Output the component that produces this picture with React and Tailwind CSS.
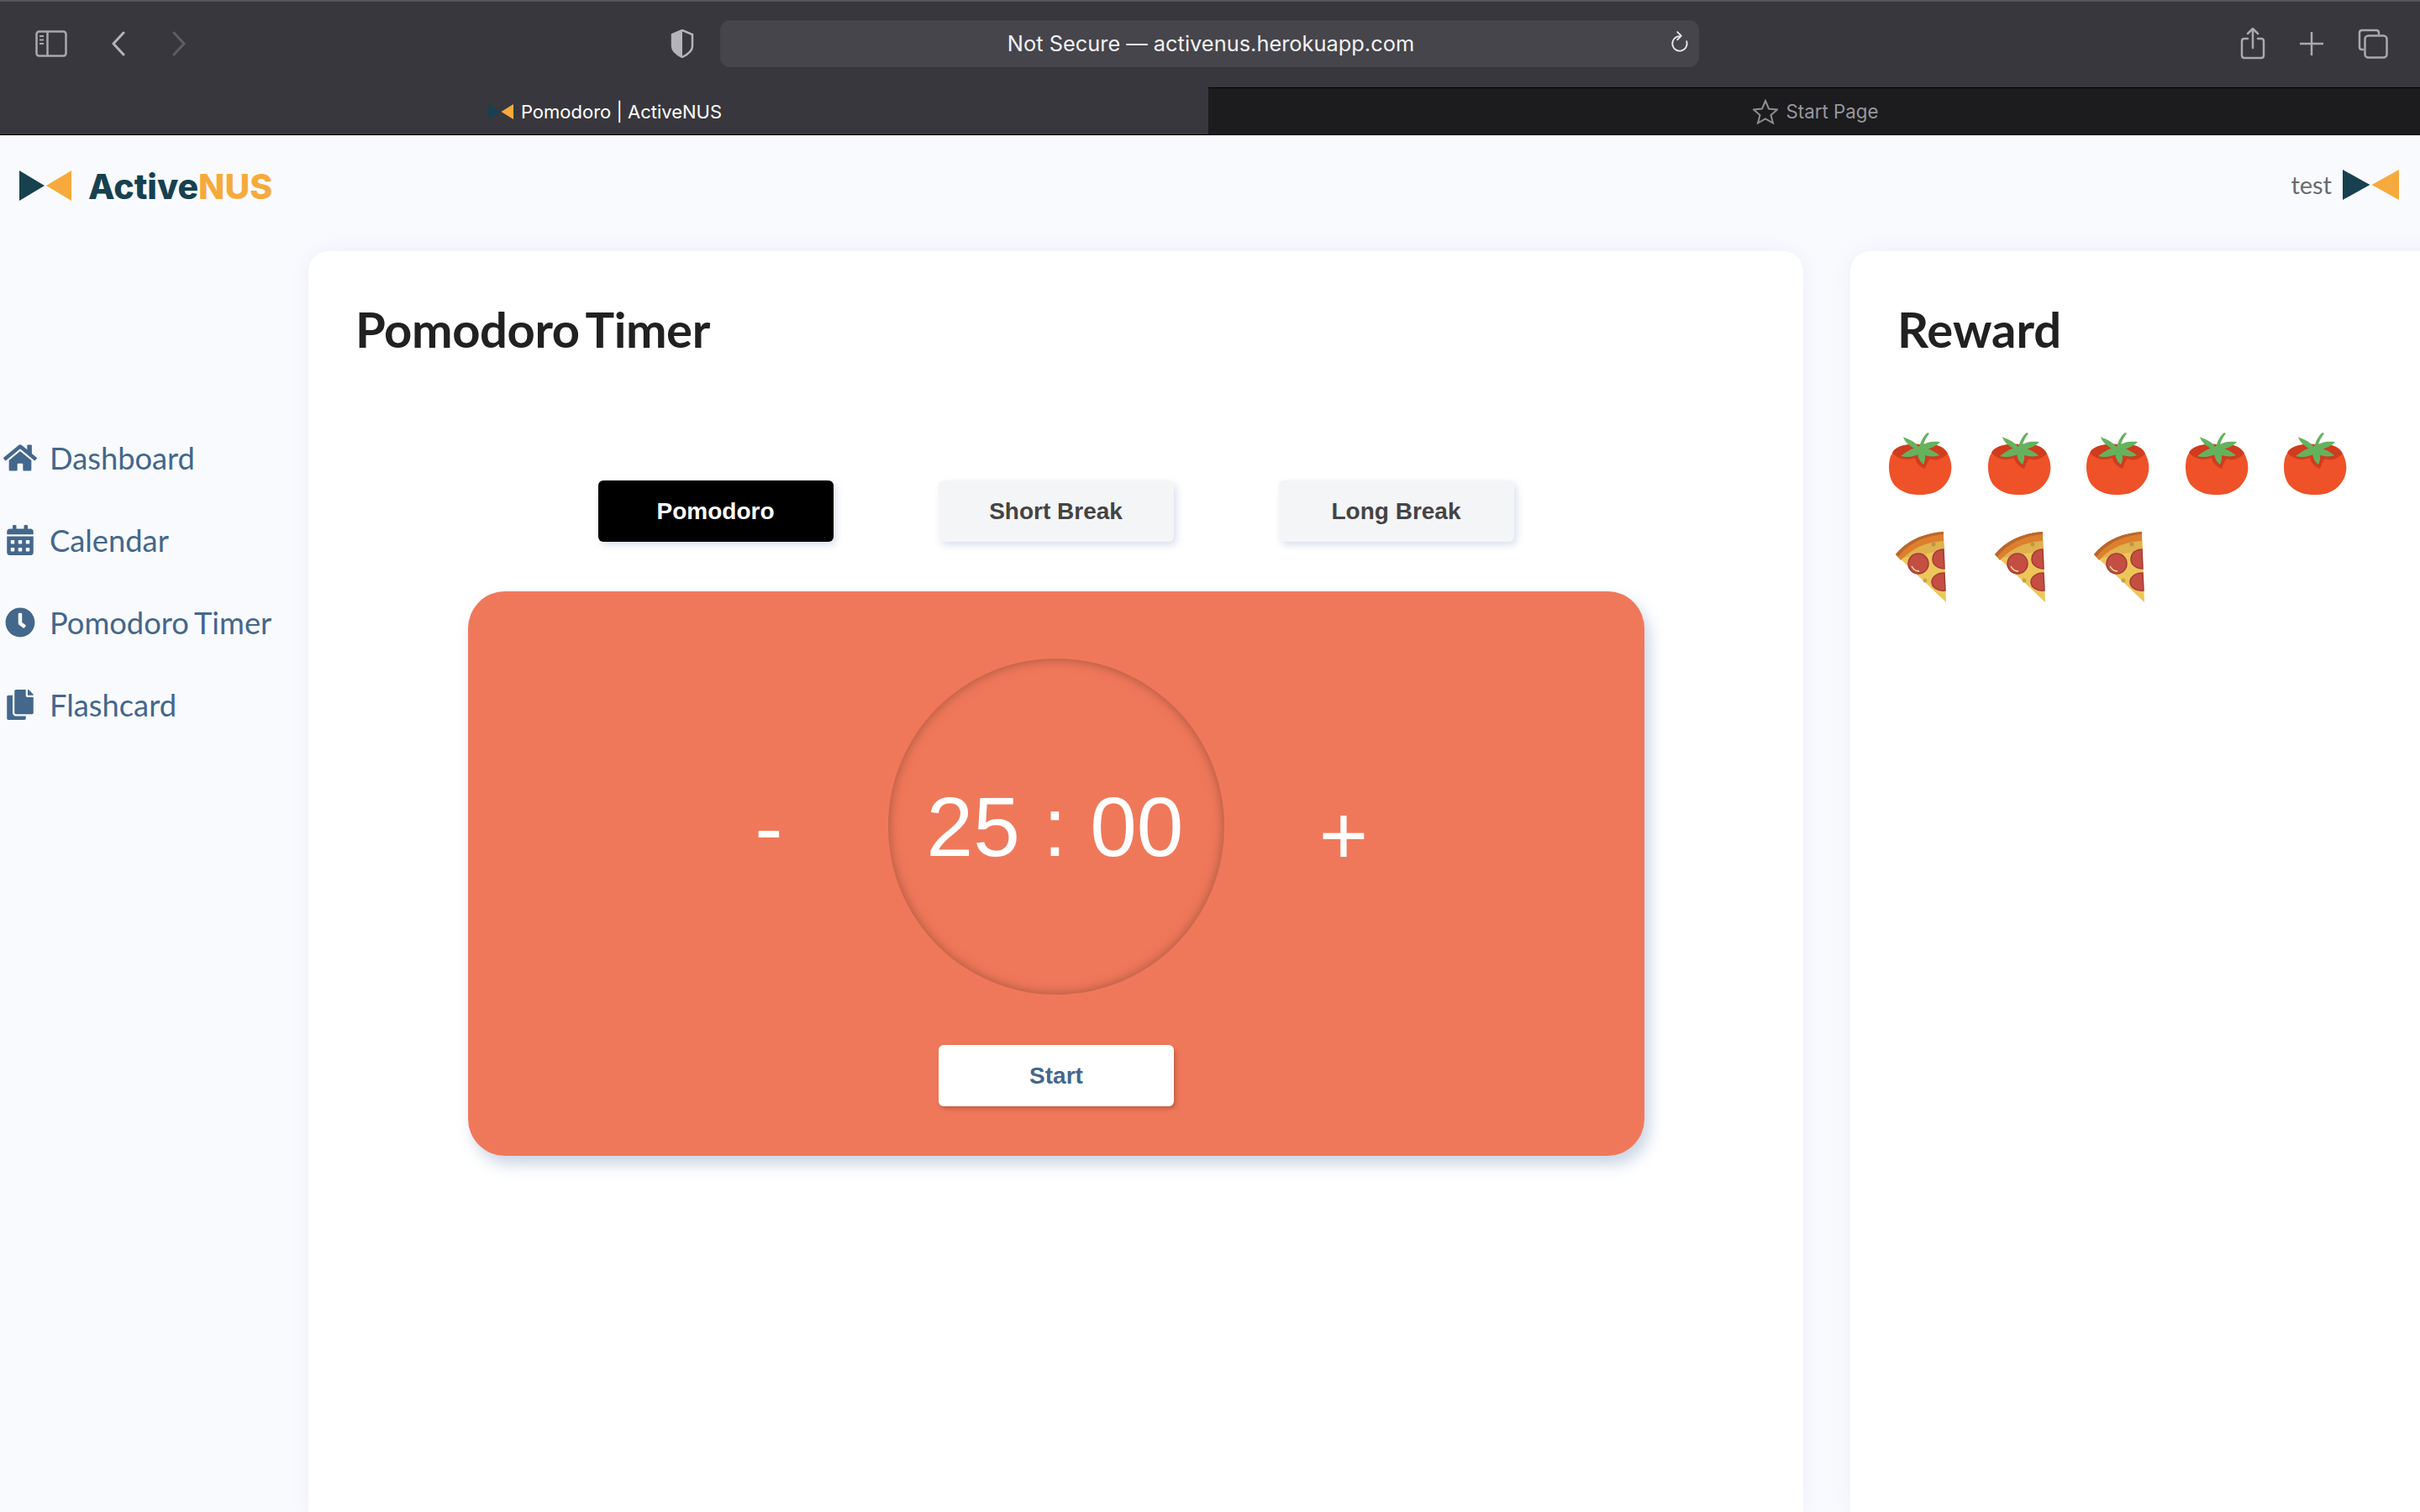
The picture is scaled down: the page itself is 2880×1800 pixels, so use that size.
import { FaHome, FaCalendarAlt, FaClock, FaCopy } from 'react-icons/fa';

const navItems = [
  { label: 'Dashboard', Icon: FaHome, size: 'text-[40px]' },
  { label: 'Calendar', Icon: FaCalendarAlt, size: 'text-[36px]' },
  { label: 'Pomodoro Timer', Icon: FaClock, size: 'text-[36px]' },
  { label: 'Flashcard', Icon: FaCopy, size: 'text-[36px]' },
];

function BowTie({ className, dark = '#17414f', light = '#f6aa3d' }) {
  return (
    <svg viewBox="0 0 62 36" preserveAspectRatio="none" className={className}>
      <path d="M0 0 L30 18 L0 36 Z" fill={dark} />
      <path d="M62 0 L32 18 L62 36 Z" fill={light} />
    </svg>
  );
}

function Tomato() {
  return (
    <svg viewBox="0 0 76 75" className="h-[75px] w-[76px]">
      <path d="M38 14 C52 13 66 14 72 27 C78 40 76 54 66 64 C57 73 46 74 38 74 C30 74 18 73 9 64 C1 56 -1 40 3 28 C9 15 24 13 38 14 Z" fill="#ef5228" />
      <path d="M5 24 C9 15 24 13 38 14 C52 13 66 14 71 25 C64 32 56 34 50 31 C47 34 46 38 44 43 C38 41 33 36 32 30 C24 33 13 33 5 24 Z" fill="#cf3c1e" />
      <g fill="#65b25e">
        <path d="M37 17 C39 10 42 4 47 0 L49 1 C45 6 42 12 41 18 Z" />
        <path d="M37 18 C32 10 26 9 18 5 C20 12 26 16 33 20 Z" />
        <path d="M38 18 C44 11 52 10 62 11 C58 16 50 19 42 21 Z" />
        <path d="M38 16 C30 18 22 22 15 28 C22 30 32 29 39 24 Z" />
        <path d="M38 16 C46 18 55 22 61 27 C54 30 44 28 38 24 Z" />
        <path d="M36 20 C34 28 37 34 42 38 C45 32 45 26 41 20 Z" />
      </g>
    </svg>
  );
}

function Pizza() {
  return (
    <svg viewBox="0 0 62 84" className="h-[84px] w-[62px]">
      <path d="M1 27 C14 11 33 2 58 0 L61 84 Z" fill="#edc65a" />
      <path d="M7 32 C19 19 36 10 58 8 L59 22 Z" fill="#e0b24e" />
      <path d="M1 27 C14 11 33 2 58 0 L58 11 C36 12 19 21 7 34 Z" fill="#de7f2d" />
      <path d="M1 27 C14 11 33 2 58 0 L58 3 C35 5 16 14 4 30 Z" fill="#b8682f" />
      <ellipse cx="28" cy="38" rx="12" ry="12" fill="#c44e41" stroke="#a53a3a" strokeWidth="1.5" />
      <path d="M20 41 C22 45 25 47 29 47" stroke="#f7e6a0" strokeWidth="1.5" fill="none" />
      <path d="M58 21 C50 21 45 26 45 33 C45 39 51 44 59 44 Z" fill="#c44e41" stroke="#a53a3a" strokeWidth="1.5" />
      <path d="M59 49 C50 49 44 54 44 60 C44 66 51 71 60 70 Z" fill="#c44e41" stroke="#a53a3a" strokeWidth="1.5" />
      <circle cx="46" cy="15" r="2.5" fill="#bd9545" />
      <circle cx="36" cy="58" r="2.5" fill="#c9a14a" />
    </svg>
  );
}

function TabButton({ children, active }) {
  return (
    <button
      className={
        active
          ? 'h-[73px] w-[280px] rounded-[6px] bg-black text-[28px] font-bold text-white shadow-[3px_4px_8px_rgba(150,165,200,0.35)]'
          : 'h-[73px] w-[280px] rounded-[6px] bg-[#f4f5f7] text-[28px] font-bold text-[#444444] shadow-[3px_4px_8px_rgba(150,165,200,0.35)]'
      }
    >
      {children}
    </button>
  );
}

export default function App() {
  return (
    <div className="flex h-[1800px] w-[2880px] flex-col overflow-hidden bg-[#f9fafe] font-['Liberation_Sans',sans-serif]">
      {/* safari toolbar */}
      <div className="flex h-[104px] shrink-0 items-center border-t-[2px] border-t-[#55545a] bg-[#38373d] pb-[2px] font-['Inter',sans-serif]">
        <div className="flex w-[857px] items-center pl-[42px]">
          <svg viewBox="0 0 38 32" className="h-[32px] w-[38px]" fill="none" stroke="#a9a8ad" strokeWidth="2.5">
            <rect x="1.5" y="1.5" width="35" height="29" rx="3" />
            <path d="M14.5 2 V30" />
            <path d="M5 7 H10 M5 11.5 H10 M5 16 H10" strokeWidth="1.8" />
          </svg>
          <svg viewBox="0 0 18 30" className="ml-[52px] h-[30px] w-[18px]" fill="none" stroke="#b4b3b8" strokeWidth="3" strokeLinecap="round" strokeLinejoin="round">
            <path d="M15 2 L3 15 L15 28" />
          </svg>
          <svg viewBox="0 0 18 30" className="ml-[54px] h-[30px] w-[18px]" fill="none" stroke="#5e5d63" strokeWidth="3" strokeLinecap="round" strokeLinejoin="round">
            <path d="M3 2 L15 15 L3 28" />
          </svg>
          <svg viewBox="0 0 28 34" className="ml-[576px] h-[34px] w-[28px]">
            <path d="M14 1 L26 6 V20 C26 26 20 30 14 33 C8 30 2 26 2 20 V6 Z" fill="none" stroke="#b5b4b9" strokeWidth="2.5" />
            <path d="M14 1 L2 6 V20 C2 26 8 30 14 33 Z" fill="#b5b4b9" />
          </svg>
        </div>
        <div className="relative flex h-[56px] w-[1165px] items-center justify-center rounded-[12px] bg-[#46454b] pl-[3px] text-[25.4px] text-[#f2f2f3]">
          Not Secure — activenus.herokuapp.com
          <svg viewBox="0 0 24 30" className="absolute right-[12px] top-[12px] h-[28px] w-[22px]" fill="none" stroke="#e8e8ea" strokeWidth="2" strokeLinecap="round" strokeLinejoin="round">
            <path d="M12 7.5 A9.5 9.5 0 1 0 21 14" />
            <path d="M9 2 L14 7 L9 12" />
          </svg>
        </div>
        <div className="flex flex-1 items-center justify-end gap-[41px] pr-[38px]">
          <svg viewBox="0 0 30 38" className="h-[38px] w-[30px]" fill="none" stroke="#aaa9ae" strokeWidth="2.5" strokeLinecap="round">
            <path d="M9 13 H5 Q2 13 2 16 V33 Q2 36 5 36 H25 Q28 36 28 33 V16 Q28 13 25 13 H21" />
            <path d="M15 24 V2 M9 7 L15 1 L21 7" />
          </svg>
          <svg viewBox="0 0 28 28" className="h-[28px] w-[28px]" fill="none" stroke="#aaa9ae" strokeWidth="2.5">
            <path d="M14 0 V28 M0 14 H28" />
          </svg>
          <svg viewBox="0 0 36 36" className="h-[36px] w-[36px]" fill="none" stroke="#aaa9ae" strokeWidth="2.5">
            <path d="M7 25 H5 Q2 25 2 22 V5 Q2 2 5 2 H22 Q25 2 25 5 V7" />
            <rect x="8.5" y="8.5" width="26" height="26" rx="4" />
          </svg>
        </div>
      </div>

      {/* tab strip */}
      <div className="flex h-[57px] shrink-0 font-['Inter',sans-serif]">
        <div className="flex w-[1438px] items-center justify-center gap-[9px] border-b border-b-black bg-[#38373d] pl-[2px] pt-[2px] text-[22px] text-white">
          <BowTie className="h-[18px] w-[30px]" />
          <span>Pomodoro | ActiveNUS</span>
        </div>
        <div className="flex flex-1 items-center justify-center gap-[10px] border-y border-y-black bg-[#1c1c1e] pl-[3px] pt-[1px] text-[22.3px] text-[#98979c]">
          <svg viewBox="0 0 30 30" className="h-[30px] w-[30px]" fill="none" stroke="#8e8d92" strokeWidth="2">
            <path d="M15 2 L19 11.5 L29 12.5 L21.5 19 L24 28.5 L15 23.5 L6 28.5 L8.5 19 L1 12.5 L11 11.5 Z" />
          </svg>
          <span>Start Page</span>
        </div>
      </div>

      {/* navbar */}
      <div className="flex h-[138px] shrink-0 items-start justify-between pl-[23px] pr-[25px] pt-[41px]">
        <div className="flex items-center gap-[20px]">
          <BowTie className="h-[36px] w-[62px]" />
          <span className="mt-[2px] font-['Inter',sans-serif] text-[41px] leading-[36px] font-extrabold text-[#17414f]">
            Active<span className="text-[#f6aa3d]">NUS</span>
          </span>
        </div>
        <div className="flex items-center gap-[13px]">
          <span className="font-['Lato',sans-serif] text-[29px] leading-[36px] text-[#6b6b6b]">test</span>
          <BowTie className="h-[36px] w-[67px]" />
        </div>
      </div>

      <div className="flex min-h-0 flex-1">
        {/* sidebar */}
        <nav className="flex w-[367px] shrink-0 flex-col gap-[50px] pt-[222px] font-['Lato',sans-serif] text-[36.3px] leading-[48px] text-[#44678c] [word-spacing:-2px]">
          {navItems.map(({ label, Icon, size }) => (
            <div key={label} className="flex items-center">
              <div className={`ml-[4px] flex w-[40px] justify-center ${size}`}>
                <Icon />
              </div>
              <span className="ml-[15px] whitespace-nowrap">{label}</span>
            </div>
          ))}
        </nav>

        {/* timer card */}
        <main className="w-[1779px] shrink-0 rounded-t-[24px] bg-white pl-[57px] pt-[60px] shadow-[0_0_24px_rgba(200,210,230,0.25)]">
          <h1 className="-ml-[1px] font-['Lato',sans-serif] text-[58px] leading-[66px] font-bold tracking-[-0.43px] text-[#212121] [word-spacing:-5px]">Pomodoro Timer</h1>
          <div className="mt-[147px] flex justify-center gap-[125px] pr-[57px]">
            <TabButton active>Pomodoro</TabButton>
            <TabButton>Short Break</TabButton>
            <TabButton>Long Break</TabButton>
          </div>
          <div className="ml-[133px] mt-[59px] flex h-[672px] w-[1400px] flex-col items-center rounded-[44px] bg-[#f0785a] pt-[80px] shadow-[6px_10px_18px_rgba(140,160,195,0.45)]">
            <div className="flex items-center text-white">
              <button className="mt-[2px] w-[60px] text-[100px] leading-none">-</button>
              <div className="ml-[112px] mr-[112px] flex h-[400px] w-[400px] items-center justify-center rounded-full pr-[3px] text-[100px] leading-none shadow-[inset_0_0_14px_rgba(110,60,40,0.6)]">
                25 : 00
              </div>
              <button className="mt-[20px] w-[60px] text-[100px] leading-none">+</button>
            </div>
            <button className="mt-[60px] h-[73px] w-[280px] rounded-[6px] bg-white text-[28px] font-bold text-[#44678c] shadow-[2px_3px_5px_rgba(120,60,40,0.4)]">
              Start
            </button>
          </div>
        </main>

        {/* reward card */}
        <aside className="ml-[56px] w-[800px] shrink-0 rounded-t-[24px] bg-white pl-[56px] pt-[60px] shadow-[0_0_24px_rgba(200,210,230,0.25)]">
          <h2 className="font-['Lato',sans-serif] text-[58px] leading-[66px] font-bold text-[#212121]">Reward</h2>
          <div className="-ml-[11px] mt-[90px] flex gap-[41.5px]">
            {[0, 1, 2, 3, 4].map((i) => (
              <Tomato key={i} />
            ))}
          </div>
          <div className="-ml-[3px] mt-[43px] flex gap-[56px]">
            {[0, 1, 2].map((i) => (
              <Pizza key={i} />
            ))}
          </div>
        </aside>
      </div>
    </div>
  );
}
